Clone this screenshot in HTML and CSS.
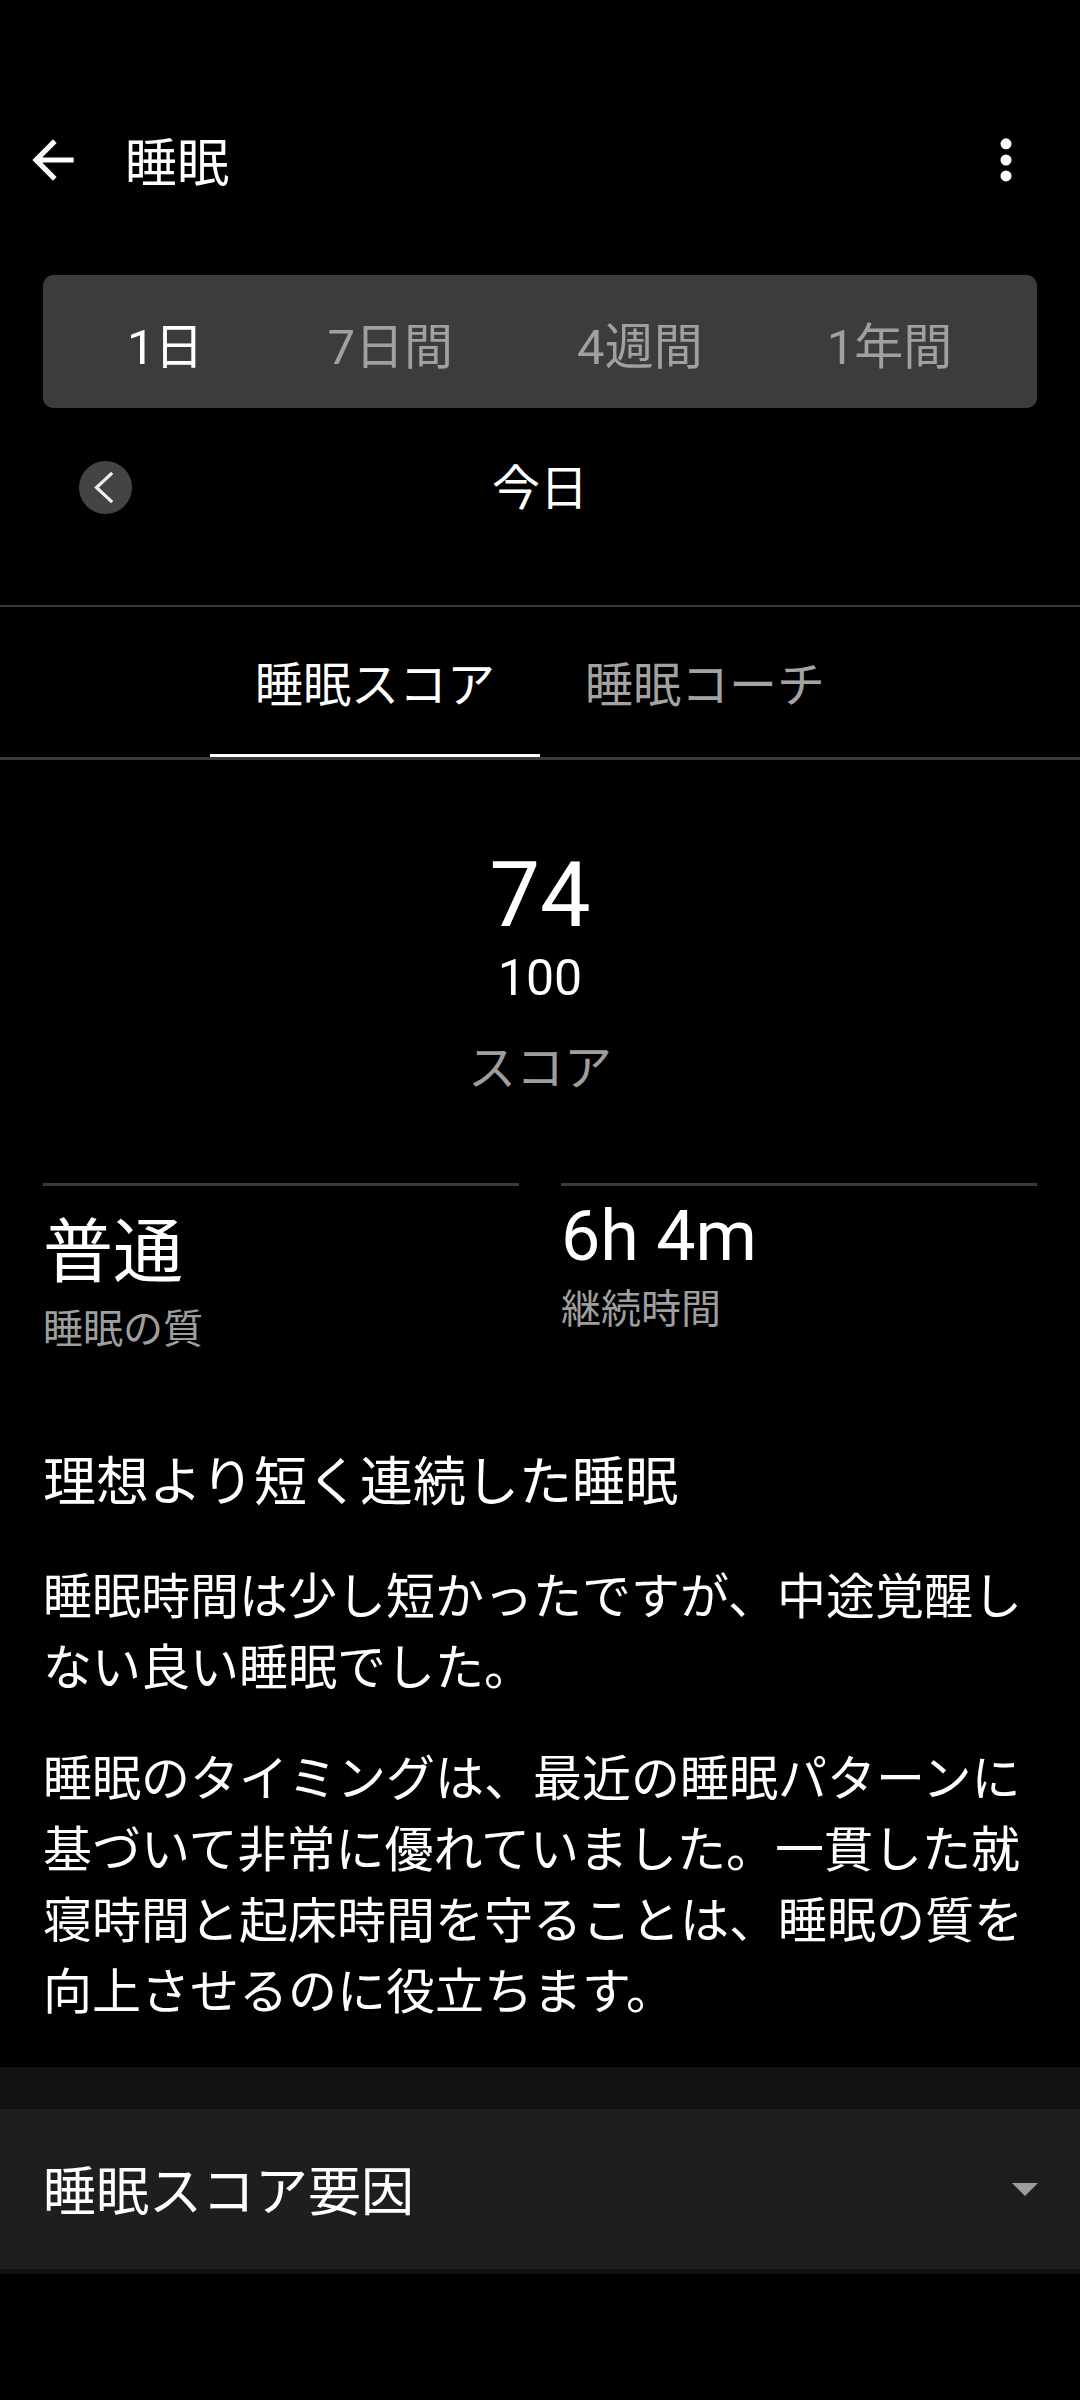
FILE: index.html
```html
<!DOCTYPE html>
<html lang="ja">
<head>
<meta charset="utf-8">
<title>睡眠</title>
<link rel="stylesheet" href="styles.css">
</head>
<body>
<div class="page">
  <header class="topbar">
    <svg class="back-icon" viewBox="0 0 24 24" aria-hidden="true"><path d="M20 11H7.83l5.59-5.59L12 4l-8 8 8 8 1.41-1.41L7.83 13H20v-2z" fill="#fff"/></svg>
    <h1 class="title">睡眠</h1>
    <svg class="more-icon" viewBox="0 0 24 24" aria-hidden="true"><circle cx="12" cy="6.1" r="2" fill="#fff"/><circle cx="12" cy="12" r="2" fill="#fff"/><circle cx="12" cy="17.8" r="2" fill="#fff"/></svg>
  </header>

  <nav class="segments">
    <span class="segment segment--active">1日</span>
    <span class="segment">7日間</span>
    <span class="segment">4週間</span>
    <span class="segment">1年間</span>
  </nav>

  <div class="date-row">
    <div class="prev-btn">
      <svg viewBox="0 0 53 53" aria-hidden="true"><polyline points="32,13 17.5,26.5 32,40" fill="none" stroke="#eeeeee" stroke-width="3.2" stroke-linecap="square"/></svg>
    </div>
    <div class="date-label">今日</div>
    <div></div>
  </div>

  <div class="tabs">
    <div class="tab tab--active">睡眠スコア</div>
    <div class="tab">睡眠コーチ</div>
  </div>

  <section class="score">
    <div class="score-value">74</div>
    <div class="score-max">100</div>
    <div class="score-label">スコア</div>
  </section>

  <section class="stats">
    <div class="stat stat--cjk">
      <div class="stat-value">普通</div>
      <div class="stat-label">睡眠の質</div>
    </div>
    <div class="stat">
      <div class="stat-value">6h 4m</div>
      <div class="stat-label">継続時間</div>
    </div>
  </section>

  <section class="summary">
    <h2 class="summary-title">理想より短く連続した睡眠</h2>
    <p class="summary-text summary-text--first">睡眠時間は少し短かったですが、中途覚醒しない良い睡眠でした。</p>
    <p class="summary-text">睡眠のタイミングは、最近の睡眠パターンに基づいて非常に優れていました。一貫した就寝時間と起床時間を守ることは、睡眠の質を向上させるのに役立ちます。</p>
  </section>

  <section class="factors">
    <div class="factor-card">
      <div class="factor-title">睡眠スコア要因</div>
      <span class="factor-caret"></span>
    </div>
  </section>
</div>
</body>
</html>
```

FILE: styles.css
```css
* {
  box-sizing: border-box;
}

html, body {
  margin: 0;
  padding: 0;
  background: #000;
}

body {
  width: 1080px;
  min-height: 2400px;
  font-family: Roboto, "Noto Sans CJK JP", sans-serif;
  color: #fff;
}

.page {
  width: 1080px;
}

/* Top bar */
.topbar {
  display: flex;
  align-items: center;
  height: 128px;
  margin-top: 96px;
}

.back-icon {
  width: 62px;
  height: 62px;
  margin-left: 22px;
  flex: none;
}

.title {
  margin: 10px 0 0 41px;
  font-size: 52px;
  line-height: 64px;
  font-weight: 400;
  flex: 1;
}

.more-icon {
  width: 66px;
  height: 66px;
  margin-right: 41px;
  flex: none;
}

/* Segmented period selector */
.segments {
  display: flex;
  align-items: center;
  gap: 124px;
  height: 133px;
  margin: 51px 43px 0;
  padding: 13px 0 0 84px;
  background: #3c3c3c;
  border-radius: 10px;
}

.segment {
  font-size: 49px;
  line-height: 64px;
  color: #a0a0a0;
  white-space: nowrap;
}

.segment--active {
  color: #fff;
}

/* Date row */
.date-row {
  display: grid;
  grid-template-columns: 1fr auto 1fr;
  align-items: center;
  height: 158px;
  padding: 0 79px;
}

.prev-btn {
  width: 53px;
  height: 53px;
  border-radius: 50%;
  background: #444;
}

.prev-btn svg {
  display: block;
  width: 53px;
  height: 53px;
}

.date-label {
  font-size: 48px;
  line-height: 64px;
  padding-top: 4px;
}

/* Tabs */
.tabs {
  display: flex;
  justify-content: center;
  margin-top: 39px;
  border-top: 2px solid #3a3a3a;
  border-bottom: 3px solid #3a3a3a;
}

.tab {
  width: 330px;
  height: 150px;
  padding-top: 11px;
  display: flex;
  align-items: center;
  justify-content: center;
  font-size: 48px;
  line-height: 64px;
  color: #a3a3a3;
  border-bottom: 3px solid transparent;
}

.tab--active {
  color: #fff;
  border-bottom-color: #fff;
}

/* Score */
.score {
  text-align: center;
}

.score-value {
  margin-top: 86px;
  font-size: 90px;
  line-height: 100px;
}

.score-max {
  font-size: 50px;
  line-height: 64px;
}

.score-label {
  margin-top: 27px;
  font-size: 48px;
  line-height: 64px;
  color: #9e9e9e;
}

/* Stats */
.stats {
  display: grid;
  grid-template-columns: 1fr 1fr;
  column-gap: 42px;
  margin-top: 82px;
  padding: 0 43px;
  align-items: start;
}

.stat {
  border-top: 3px solid #3a3a3a;
  padding-top: 5px;
}

.stat-value {
  font-size: 70px;
  line-height: 90px;
}

.stat-label {
  font-size: 40px;
  line-height: 58px;
  color: #9e9e9e;
}

.stat--cjk {
  padding-top: 22px;
}

.stat--cjk .stat-label {
  margin-top: 3px;
}

/* Summary text */
.summary {
  padding: 0 43px;
}

.summary-title {
  margin: 89px 0 0;
  font-size: 53px;
  line-height: 70px;
  font-weight: 400;
}

.summary-text {
  margin: 40px 0 0;
  font-size: 49px;
  line-height: 71px;
}

.summary-text--first {
  margin-top: 44px;
}

/* Factors */
.factors {
  margin-top: 39px;
  padding: 42px 0 5px;
  background: #111;
}

.factor-card {
  display: flex;
  align-items: center;
  justify-content: space-between;
  height: 160px;
  padding: 0 42px 0 43px;
  background: #1e1e1e;
}

.factor-title {
  margin-top: 8px;
  font-size: 53px;
  line-height: 70px;
}

.factor-caret {
  width: 0;
  height: 0;
  border-left: 13px solid transparent;
  border-right: 13px solid transparent;
  border-top: 13px solid #9e9e9e;
}
```
